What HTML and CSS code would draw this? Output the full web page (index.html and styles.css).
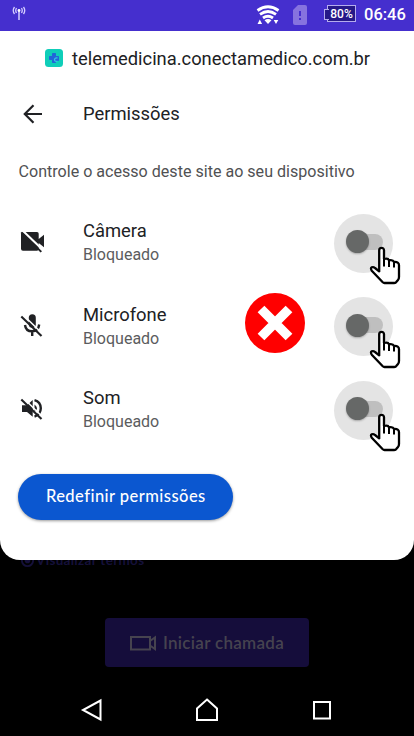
FILE: index.html
```html
<!DOCTYPE html>
<html lang="pt-BR">
<head>
<meta charset="utf-8">
<meta name="viewport" content="width=device-width, initial-scale=1">
<title>Permissões</title>
<link rel="stylesheet" href="styles.css">
</head>
<body>
<svg width="0" height="0" class="defs">
  <symbol id="hand" viewBox="0 0 32 39">
    <path d="M10.200 24V4.300a2.400 2.400 0 0 1 4.800 0V13q4-1.200 5 1.300q4-.8 5 1.700q5-.4 5 3.300V31q0 2-1 3L27 36.300q-.8.700-2 .7H15.500q-1 0-2-1L3 25Q1 22.400 2.800 21.300Q4.400 20.600 6 22L10.200 25.400Z" fill="#fff" stroke="#000" stroke-width="2.300" stroke-linejoin="round"/>
    <path d="M15 13V20.500M20 15V21M25 16.800V21.500" fill="none" stroke="#000" stroke-width="2"/>
  </symbol>
</svg>
<header class="status">
  <svg class="antenna" viewBox="0 0 14 15" fill="none" stroke="#d5ceff" stroke-width="1.3"><path d="M7 5V14" stroke-width="1.500"/><circle cx="7" cy="4.500" r="1.400" fill="#fff" stroke="none"/><path d="M4.500 2Q3 4.500 4.500 7M9.500 2Q11 4.500 9.500 7M2.500 1Q0 4.500 2.500 8M11.500 1Q14 4.500 11.500 8"/></svg>
  <svg class="wifi" viewBox="0 0 24 20"><g fill="none" stroke="#fff" stroke-width="2.800"><path d="M1.500 5.500Q12-2 22.500 5.500M4 9.400Q12 3.700 20 9.400M7 13Q12 9.500 17 13"/></g><path d="M8.500 15.300Q12 12.500 15.500 15.300L12 19ZM1.500 19l2.300-4.500L6.100 19ZM17.700 15h4.600L20 19Z" fill="#fff"/></svg>
  <svg class="sim" viewBox="0 0 14 20"><path d="M5 0h7q2 0 2 2v16q0 2-2 2H2q-2 0-2-2V5Z" fill="#8673df"/><path d="M6 6h2v5H6ZM6 13h2v2H6Z" fill="#452fce"/></svg>
  <div class="battery"><span>80%</span></div>
  <time class="clock">06:46</time>
</header>
<main class="sheet">
  <div class="site">
    <svg class="favicon" viewBox="0 0 18 18"><rect width="18" height="18" rx="3.500" fill="#0fceb9"/><path d="M7.500 4.500h3v3h3v4h-3v2h-3v-3h-3v-3h3Z" fill="#2165d8" stroke="#2165d8" stroke-linejoin="round"/><path d="M12.500 9Q9.500 8.500 9.500 11Q10 13 12.500 12" fill="none" stroke="#35c5e5" stroke-width="1.300"/></svg>
    <span>telemedicina.conectamedico.com.br</span>
  </div>
  <div class="title">
    <svg class="back" viewBox="0 0 20 20" fill="none" stroke="#202124" stroke-width="2.200"><path d="M19 10H2M10.500 1.300L1.800 10l8.700 8.700"/></svg>
    <h1>Permissões</h1>
  </div>
  <p class="intro">Controle o acesso deste site ao seu dispositivo</p>
  <ul class="permissions">
    <li>
      <svg class="icon" viewBox="0 0 26 26"><path d="M2 5q0-2 2-2H18q1.700 0 1.700 1.700V10L25 5.700V18.300L19.700 14V20q0 1.700-1.700 1.700H4q-2 0-2-2Z" fill="#202124"/><path d="M3.500 1.500L25 22" stroke="#fff" stroke-width="2.200"/><path d="M2.300 3.400L22.300 22.900" stroke="#202124" stroke-width="2"/></svg>
      <div class="label"><strong>Câmera</strong><span>Bloqueado</span></div>
      <div class="toggle"><i class="track"></i><i class="knob"></i><svg class="hand"><use href="#hand"/></svg></div>
    </li>
    <li>
      <svg class="icon" viewBox="0 0 26 26"><rect x="9.800" y="1.200" width="7" height="13.500" rx="3.500" fill="#202124"/><path d="M6 12q.7 6.300 7.200 6.300q6.200-.3 7-6.800M13.200 18V23" fill="none" stroke="#202124" stroke-width="2.400"/><path d="M4.500 2.300L24.500 21.800" stroke="#fff" stroke-width="1.600"/><path d="M2.300 3.400L22.500 23" stroke="#202124" stroke-width="2.100"/></svg>
      <div class="label"><strong>Microfone</strong><span>Bloqueado</span></div>
      <svg class="denied" viewBox="0 0 60 60"><circle cx="30" cy="30" r="30" fill="#f00"/><path d="M16 16L44 44M44 16L16 44" stroke="#fff" stroke-width="9.500"/></svg>
      <div class="toggle"><i class="track"></i><i class="knob"></i><svg class="hand"><use href="#hand"/></svg></div>
    </li>
    <li>
      <svg class="icon" viewBox="0 0 26 26"><path d="M3 9.300H8L13.700 4V20.700L8 16H3Z" fill="#202124"/><path d="M15.500 8.500V16q5-3.500 0-7.500Z" fill="#202124"/><path d="M15.500 4.200Q21.700 6 21.800 12.300Q21.700 18.500 15.500 20.600" fill="none" stroke="#202124" stroke-width="2.400"/><path d="M4.500 2.300L24.500 21.800" stroke="#fff" stroke-width="1.600"/><path d="M2.300 3.400L22.500 23" stroke="#202124" stroke-width="2.100"/></svg>
      <div class="label"><strong>Som</strong><span>Bloqueado</span></div>
      <div class="toggle"><i class="track"></i><i class="knob"></i><svg class="hand"><use href="#hand"/></svg></div>
    </li>
  </ul>
  <button class="reset"><span>Redefinir permissões</span></button>
</main>
<section class="backdrop">
  <div class="terms"><svg viewBox="0 0 16 16"><circle cx="8" cy="8" r="6" fill="none" stroke="#15103a" stroke-width="2"/><circle cx="8" cy="8" r="3" fill="#15103a"/></svg><span>Visualizar termos</span></div>
  <button class="call"><svg viewBox="0 0 26 16" fill="none" stroke="#46434f" stroke-width="2"><path d="M1 2h19v12.500H1ZM20 6l5-3.500v11.500L20 10.500"/></svg><span>Iniciar chamada</span></button>
</section>
<nav class="navbar">
  <svg viewBox="0 0 24 24"><path d="M20.500 2.500v19L3 12Z"/></svg>
  <svg viewBox="0 0 24 24"><path d="M12 1.500L22 10.500V22H2V10.500Z"/></svg>
  <svg viewBox="0 0 24 24"><path d="M4 4h16v16.500H4Z"/></svg>
</nav>
</body>
</html>
```
FILE: styles.css
```css
* { box-sizing: border-box; }
body { margin: 0; width: 414px; height: 736px; overflow: hidden; display: flex; flex-direction: column; background: #000; font-family: Roboto, sans-serif; color: #202124; }
svg { flex: none; display: block; }
.defs { position: absolute; }
span, h1, strong, time, p { white-space: nowrap; }
button { border: 0; font: inherit; }
.status { height: 31px; flex: none; background: #452fce; display: flex; align-items: center; padding: 0 9px 2px 12px; color: #fff; }
.antenna { width: 14px; height: 15px; margin-top: -2px; }
.wifi { width: 24px; height: 20px; margin-left: auto; }
.sim { width: 14px; height: 20px; margin-left: 13px; }
.battery { position: relative; width: 29px; height: 17px; margin: -2px 0 0 20px; border: 1px solid #b5aced; background: #261888; display: flex; align-items: center; justify-content: center; font-size: 12px; font-weight: 500; }
.battery::before { content: ""; position: absolute; left: -4px; top: 3px; width: 4px; height: 9px; border: 1px solid #b5aced; border-right: 0; background: #261888; }
.clock { margin: 0 0 0 8px; font-size: 16.500px; font-weight: 500; line-height: 20px; width: 41px; }
.sheet { height: 529px; flex: none; background: #fff; border-radius: 0 0 20px 20px; padding: 16px 18px 0; }
.site { display: flex; align-items: center; height: 22px; gap: 9px; padding-left: 27px; font-size: 18.350px; }
.favicon { width: 18px; height: 18px; }
.title { height: 24px; margin-top: 32.500px; display: flex; align-items: center; padding-left: 4.500px; }
.back { width: 20px; height: 20px; }
.title h1 { margin: 0 0 0 40.500px; font-size: 18.400px; font-weight: 400; }
.intro { margin: 35px 0 0; font-size: 16.080px; line-height: 22px; color: #505153; padding-left: .5px; }
.permissions { list-style: none; margin: 19px 0 0; padding: 0; }
.permissions li { height: 83.500px; display: flex; align-items: center; }
.icon { width: 26px; height: 26px; margin: -2.500px 0 0 1px; }
.label { margin: -1px 0 0 38px; display: flex; flex-direction: column; }
.label strong { font-size: 18.400px; font-weight: 400; line-height: 24px; }
.label span { font-size: 16px; line-height: 23px; color: #5b5c5e; }
.denied { width: 60px; height: 60px; margin: -7.500px 29px 0 auto; }
.toggle { position: relative; width: 59px; height: 59px; flex: none; border-radius: 50%; background: #e4e4e4; margin-left: auto; margin-right: 3px; }
.denied + .toggle { margin-left: 0; }
.track { position: absolute; left: 18px; top: 20px; width: 31px; height: 16px; border-radius: 8px; background: #bfbfbf; }
.knob { position: absolute; left: 12px; top: 16.500px; width: 23px; height: 23px; border-radius: 50%; background: #666867; box-shadow: 0 1px 2px #0004; }
.hand { position: absolute; left: 35px; top: 32.500px; width: 32px; height: 39px; }
.reset { width: 215px; height: 46px; margin: 21.500px 0 0 .3px; border-radius: 23px; background: #0b57d0; color: #fff; display: flex; align-items: center; justify-content: center; font-size: 16.500px; font-weight: 500; letter-spacing: .45px; box-shadow: 0 1px 3px #0006; padding-bottom: 3px; }
.reset, .call { font-family: Lato, sans-serif; }
.backdrop { height: 125px; display: flex; flex-direction: column; align-items: center; }
.terms { height: 14px; width: 100%; margin-top: -7px; padding-left: 20px; display: flex; align-items: center; gap: 1px; color: #15103a; font: bold 13.500px Lato, sans-serif; letter-spacing: .3px; position: relative; z-index: -1; }
.terms svg { width: 15px; height: 15px; }
.call { width: 204px; height: 49px; margin-top: 51px; border-radius: 4px; background: #150d3b; color: #46434f; display: flex; align-items: center; justify-content: center; gap: 7px; padding: 0; font-size: 17px; font-weight: 600; letter-spacing: .3px; }
.call svg { width: 26px; height: 16px; }
.navbar { display: flex; justify-content: space-between; padding: 13px 80px 0; }
.navbar svg { width: 24px; height: 24px; fill: none; stroke: #fff; stroke-width: 2; }
```
